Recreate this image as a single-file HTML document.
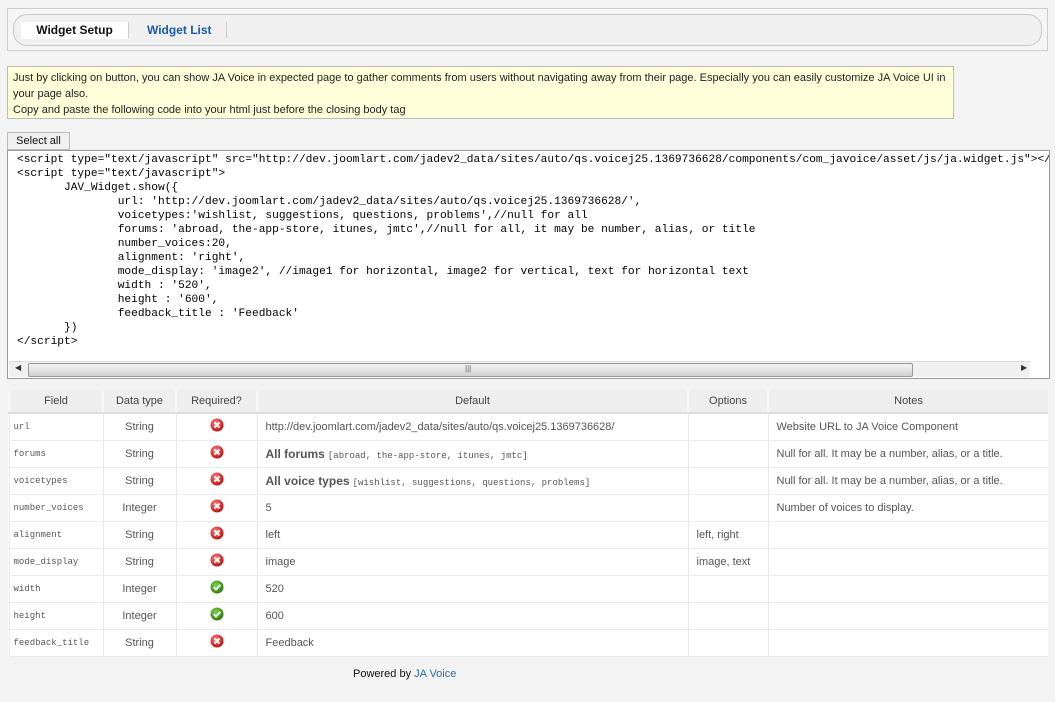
<!DOCTYPE html>
<html><head><meta charset="utf-8">
<style>
*{box-sizing:border-box}
body{margin:0;width:1055px;height:702px;background:#f3f3f3;font-family:"Liberation Sans",Arial,sans-serif;font-size:11px;color:#333;position:relative;overflow:hidden}
.frame{position:absolute;left:7px;top:8px;width:1041px;height:43px;border:1px solid #ccc;background:#f5f5f5}
.tabs{position:absolute;left:13px;top:14px;width:1029px;height:32px;border:1px solid #c8c8c8;border-radius:14px;background:#f0f0f0}
.tab1{position:absolute;left:21px;top:22px;width:107px;height:17px;background:#fff;font-weight:bold;font-size:12px;color:#111;text-align:center;line-height:17px}
.tab2{position:absolute;left:147px;top:22px;font-weight:bold;font-size:12px;color:#1a5aa6;line-height:17px}
.sep{position:absolute;top:22px;width:1px;height:16px;background:#ccc}
.note{position:absolute;left:7px;top:66px;width:947px;height:53px;border:1px solid #bbb;background:#ffffd9;padding:3px 5px;font-size:11px;line-height:16px;color:#222}
.btn{position:absolute;left:7px;top:132px;width:63px;height:18px;border:1px solid #bbb;background:#f0f0f0;font-size:11px;text-align:center;line-height:17px;color:#111}
.ta{position:absolute;left:7px;top:150px;width:1043px;height:229px;border:1px solid #999;background:#fff;overflow:hidden}
pre{margin:0;position:absolute;left:9px;top:2px;font-family:"Liberation Mono",monospace;font-size:11.2px;line-height:14px;color:#000;white-space:pre}
.sb{position:absolute;left:1px;bottom:1px;width:1021px;height:16px;background:#f0f0f0;border-top:1px solid #ddd}
.thumb{position:absolute;left:19px;top:1px;width:885px;height:14px;border:1px solid #999;border-radius:2px;background:linear-gradient(#f4f4f4,#d0d0d0)}
table{position:absolute;left:8px;top:390px;width:1040px;border-collapse:collapse;background:#fff}
th{background:#eee;height:23px;font-weight:normal;color:#444;font-size:11px;border-left:2px solid #f8f8f8;border-bottom:2px solid #ddd}
td{height:27px;border-left:1px solid #e8e8e8;border-bottom:1px solid #eaeaea;color:#555;font-size:11px;padding:0 8px}
td.f{font-family:"Liberation Mono",monospace;font-size:9px;padding-left:4px}
td.c{text-align:center}
.m{font-family:"Liberation Mono",monospace;font-size:9px}
b{font-size:12px;color:#555}
.pw{position:absolute;left:353px;top:668px;font-size:11px;color:#111}
.pw span{color:#2a6ea8}
</style></head><body>
<div class="frame"></div>
<div class="tabs"></div>
<div class="tab1">Widget Setup</div>
<div class="sep" style="left:128px"></div>
<div class="tab2">Widget List</div>
<div class="sep" style="left:226px"></div>
<div class="note">Just by clicking on button, you can show JA Voice in expected page to gather comments from users without navigating away from their page. Especially you can easily customize JA Voice UI in your page also.<br>Copy and paste the following code into your html just before the closing body tag</div>
<div class="btn">Select all</div>
<div class="ta"><pre>&lt;script type="text/javascript" src="http://dev.joomlart.com/jadev2_data/sites/auto/qs.voicej25.1369736628/components/com_javoice/asset/js/ja.widget.js"&gt;&lt;/script&gt;
&lt;script type="text/javascript"&gt;
       JAV_Widget.show({
               url: 'http://dev.joomlart.com/jadev2_data/sites/auto/qs.voicej25.1369736628/',
               voicetypes:'wishlist, suggestions, questions, problems',//null for all
               forums: 'abroad, the-app-store, itunes, jmtc',//null for all, it may be number, alias, or title
               number_voices:20,
               alignment: 'right',
               mode_display: 'image2', //image1 for horizontal, image2 for vertical, text for horizontal text
               width : '520',
               height : '600',
               feedback_title : 'Feedback'
       })
&lt;/script&gt;</pre>
<div class="sb"><span style="position:absolute;left:6px;top:1px;font-size:8px">◀</span><div class="thumb"><span style="position:absolute;left:436px;top:0;font-size:8px;color:#666">|||</span></div><span style="position:absolute;left:1012px;top:1px;font-size:8px">▶</span></div>
</div>
<svg width="0" height="0" style="position:absolute"><defs>
<radialGradient id="r" cx="40%" cy="35%" r="65%"><stop offset="0" stop-color="#ff8080"/><stop offset="1" stop-color="#c01010"/></radialGradient>
<radialGradient id="g" cx="40%" cy="35%" r="65%"><stop offset="0" stop-color="#7ed04a"/><stop offset="1" stop-color="#2f7f10"/></radialGradient>
<symbol id="x" viewBox="0 0 14 14"><circle cx="7" cy="7" r="6.5" fill="url(#r)"/><path d="M4.5 4.5L9.5 9.5M9.5 4.5L4.5 9.5" stroke="#fff" stroke-width="2"/></symbol>
<symbol id="ok" viewBox="0 0 14 14"><circle cx="7" cy="7" r="6.5" fill="url(#g)"/><path d="M3.8 7.2L6 9.4L10.3 4.8" stroke="#fff" stroke-width="2" fill="none"/></symbol>
</defs></svg>
<table>
<tr><th style="width:94px">Field</th><th style="width:73px">Data type</th><th style="width:81px">Required?</th><th style="width:431px">Default</th><th style="width:80px">Options</th><th>Notes</th></tr>
<tr><td class="f">url</td><td class="c">String</td><td class="c"><svg width="14" height="14"><use href="#x"/></svg></td><td>http://dev.joomlart.com/jadev2_data/sites/auto/qs.voicej25.1369736628/</td><td></td><td>Website URL to JA Voice Component</td></tr>
<tr><td class="f">forums</td><td class="c">String</td><td class="c"><svg width="14" height="14"><use href="#x"/></svg></td><td><b>All forums</b> <span class="m">[abroad, the-app-store, itunes, jmtc]</span></td><td></td><td>Null for all. It may be a number, alias, or a title.</td></tr>
<tr><td class="f">voicetypes</td><td class="c">String</td><td class="c"><svg width="14" height="14"><use href="#x"/></svg></td><td><b>All voice types</b> <span class="m">[wishlist, suggestions, questions, problems]</span></td><td></td><td>Null for all. It may be a number, alias, or a title.</td></tr>
<tr><td class="f">number_voices</td><td class="c">Integer</td><td class="c"><svg width="14" height="14"><use href="#x"/></svg></td><td>5</td><td></td><td>Number of voices to display.</td></tr>
<tr><td class="f">alignment</td><td class="c">String</td><td class="c"><svg width="14" height="14"><use href="#x"/></svg></td><td>left</td><td>left, right</td><td></td></tr>
<tr><td class="f">mode_display</td><td class="c">String</td><td class="c"><svg width="14" height="14"><use href="#x"/></svg></td><td>image</td><td>image, text</td><td></td></tr>
<tr><td class="f">width</td><td class="c">Integer</td><td class="c"><svg width="14" height="14"><use href="#ok"/></svg></td><td>520</td><td></td><td></td></tr>
<tr><td class="f">height</td><td class="c">Integer</td><td class="c"><svg width="14" height="14"><use href="#ok"/></svg></td><td>600</td><td></td><td></td></tr>
<tr><td class="f">feedback_title</td><td class="c">String</td><td class="c"><svg width="14" height="14"><use href="#x"/></svg></td><td>Feedback</td><td></td><td></td></tr>
</table>
<div class="pw">Powered by <span>JA Voice</span></div>
</body></html>
